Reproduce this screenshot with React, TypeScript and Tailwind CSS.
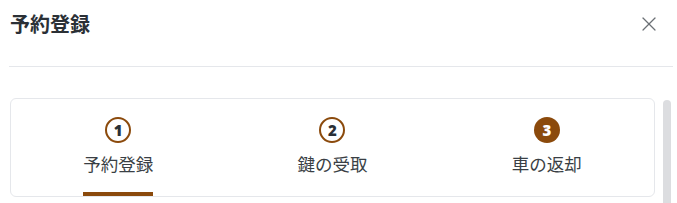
import { X } from 'lucide-react';

const steps = [
  { no: 1, label: '予約登録', state: 'current' },
  { no: 2, label: '鍵の受取', state: 'todo' },
  { no: 3, label: '車の返却', state: 'done' },
];

const App = () => {
  return (
    <div className="w-[677px] h-[203px] overflow-hidden bg-white font-['Noto_Sans_CJK_JP','Noto_Sans',sans-serif]">
      {/* Header */}
      <div className="flex items-start justify-between pl-[10px] pr-[16px] pt-[10px] h-[66px]">
        <h2 className="text-[20px] leading-[28px] font-bold text-[#2b3036]">予約登録</h2>
        <button className="mt-[2px] text-[#6b7075]">
          <X size={24} strokeWidth={1.2} />
        </button>
      </div>
      <div className="ml-[9px] mr-[4px] border-t border-[#e5e7eb]" />

      {/* Body */}
      <div className="flex items-start gap-[8px] pl-[10px] pr-[6px] pt-[31px]">
        <div className="flex-1 rounded-md border border-[#e5e7eb] grid grid-cols-3">
          {steps.map((s) => (
            <div key={s.no} className="flex justify-center items-start">
              <div
                className={`flex flex-col items-center pt-[18px] pb-[14px] border-b-4 ${
                  s.state === 'current' ? 'border-[#8b4a0c]' : 'border-transparent'
                }`}
              >
                {s.state === 'done' ? (
                  <div className="w-[26px] h-[26px] rounded-full bg-[#8b4a0c] text-white flex items-center justify-center text-[15px] leading-none font-black font-['Noto_Sans',sans-serif]">
                    {s.no}
                  </div>
                ) : (
                  <div className="w-[26px] h-[26px] rounded-full border-2 border-[#8b4a0c] text-[#2b3036] flex items-center justify-center text-[15px] leading-none font-black font-['Noto_Sans',sans-serif]">
                    {s.no}
                  </div>
                )}
                <span className="mt-[7px] text-[17.5px] leading-[28px] text-[#3a3f45]">{s.label}</span>
              </div>
            </div>
          ))}
        </div>
        <div className="w-[8px] mt-[2px] h-[110px] rounded-t-full bg-[#dcdde0]" />
      </div>
    </div>
  );
};

export default App;
